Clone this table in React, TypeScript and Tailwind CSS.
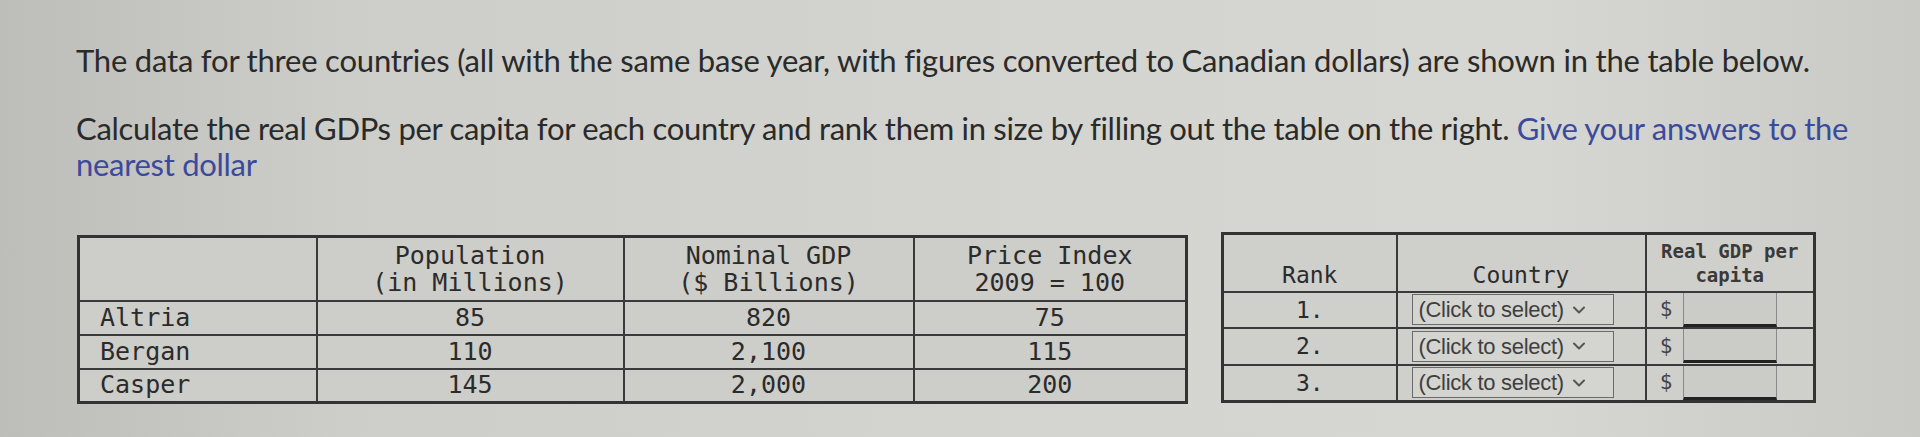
const mono = "font-['DejaVu_Sans_Mono','Liberation_Mono',monospace]";

const countries = [
  { name: 'Altria', pop: '85', gdp: '820', idx: '75' },
  { name: 'Bergan', pop: '110', gdp: '2,100', idx: '115' },
  { name: 'Casper', pop: '145', gdp: '2,000', idx: '200' },
];

const Chevron = () => (
  <svg width="14" height="10" viewBox="0 0 14 10" className="ml-[8px] shrink-0">
    <path d="M2 2.5 L7 7.5 L12 2.5" fill="none" stroke="#555" strokeWidth="2" strokeLinecap="round" strokeLinejoin="round" />
  </svg>
);

const DataTable = () => (
  <table className={`${mono} border-collapse text-[25px] text-[#2b2b2b] border-[3px] border-[#333] bg-[#cdcdc9]`}>
    <thead>
      <tr className="h-[64px] leading-[27px]">
        <th className="w-[238px] border-2 border-[#3a3a3a] font-normal"></th>
        <th className="w-[307px] border-2 border-[#3a3a3a] font-normal">
          Population
          <br />
          (in Millions)
        </th>
        <th className="w-[290px] border-2 border-[#3a3a3a] font-normal">
          Nominal GDP
          <br />
          ($ Billions)
        </th>
        <th className="w-[273px] border-2 border-[#3a3a3a] font-normal">
          Price Index
          <br />
          2009 = 100
        </th>
      </tr>
    </thead>
    <tbody>
      {countries.map((c) => (
        <tr key={c.name} className="h-[34px] leading-[28px]">
          <td className="border-2 border-[#3a3a3a] pl-[20px]">{c.name}</td>
          <td className="border-2 border-[#3a3a3a] text-center">{c.pop}</td>
          <td className="border-2 border-[#3a3a3a] text-center">{c.gdp}</td>
          <td className="border-2 border-[#3a3a3a] text-center">{c.idx}</td>
        </tr>
      ))}
    </tbody>
  </table>
);

const AnswerTable = () => (
  <table className={`${mono} border-collapse text-[23px] text-[#2b2b2b] border-[3px] border-[#333] bg-[#cfcfcb]`}>
    <thead>
      <tr className="h-[58px] leading-[24px]">
        <th className="w-[174px] border-2 border-[#3a3a3a] font-normal align-bottom pb-[4px]">Rank</th>
        <th className="w-[249px] border-2 border-[#3a3a3a] font-normal align-bottom pb-[4px]">Country</th>
        <th className="w-[169px] border-2 border-[#3a3a3a] font-bold text-[19px] align-top pt-[4px] text-[#3a3a3a]">
          Real GDP per
          <br />
          capita
        </th>
      </tr>
    </thead>
    <tbody>
      {['1.', '2.', '3.'].map((r) => (
        <tr key={r} className="h-[36px]">
          <td className="border-2 border-[#3a3a3a] text-center">{r}</td>
          <td className="border-2 border-[#3a3a3a] pl-[14px] pr-[8px]">
            <div className="flex items-center h-[31px] w-[202px] border border-[#6a6a6a] bg-[#d4d4d0] pl-[6px] whitespace-nowrap font-['Liberation_Sans',Arial,sans-serif] text-[22px] tracking-[-0.3px] text-[#3f3f3f]">
              <span>(Click to select)</span>
              <Chevron />
            </div>
          </td>
          <td className="border-2 border-[#3a3a3a] p-0">
            <div className="flex items-center h-[34px]">
              <span className="w-[36px] text-right pr-[10px] text-[21px] text-[#444]">$</span>
              <div className="h-full w-[94px] border-l border-[#8a8a8a] border-r border-[#8a8a8a] border-b-[3px] border-b-[#222] bg-[#cbcbc7]"></div>
            </div>
          </td>
        </tr>
      ))}
    </tbody>
  </table>
);

export default function App() {
  return (
    <div className="w-[1920px] h-[437px] overflow-hidden bg-[linear-gradient(90deg,#bdbdba_0%,#cdcdc9_18%,#d4d4d0_55%,#d6d6d2_80%,#c9c9c5_100%)] font-['Lato','Open_Sans',sans-serif]">
      <div className="pl-[76px] pt-[42px]">
        <p className="text-[31px] leading-[36px] text-[#2a2a2a] tracking-[-0.2px] whitespace-nowrap">
          The data for three countries (all with the same base year, with figures converted to Canadian dollars) are shown in the table below.
        </p>
        <p className="mt-[32px] text-[31px] leading-[36px] text-[#2a2a2a] tracking-[-0.3px]">
          <span className="whitespace-nowrap">
            Calculate the real GDPs per capita for each country and rank them in size by filling out the table on the right.{' '}
            <span className="text-[#3c4a9c]">Give your answers to the</span>
          </span>
          <br />
          <span className="text-[#3c4a9c]">nearest dollar</span>
        </p>
      </div>
      <div className="flex items-start gap-[33px] pl-[77px] mt-[50px]">
        <div className="mt-[3px]">
          <DataTable />
        </div>
        <AnswerTable />
      </div>
    </div>
  );
}
